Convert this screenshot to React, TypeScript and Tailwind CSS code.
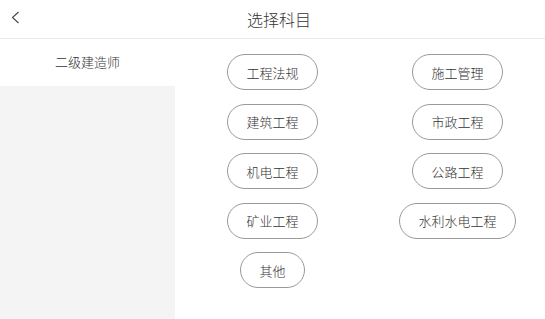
import React from 'react';

const subjects = ['工程法规', '施工管理', '建筑工程', '市政工程', '机电工程', '公路工程', '矿业工程', '水利水电工程', '其他'];

const App = () => {
  return (
    <div
      className="w-[545px] h-[319px] bg-white text-[#333] font-light overflow-hidden flex flex-col"
      style={{ fontFamily: '"Noto Sans CJK SC", "Noto Sans", sans-serif' }}
    >
      <div className="h-[39px] shrink-0 flex items-center border-b border-[#ebebeb] relative">
        <svg className="absolute left-[11px] top-[11px]" width="9" height="13" viewBox="0 0 9 13" fill="none">
          <path d="M7.5 1 L1.5 6.5 L7.5 12" stroke="#444" strokeWidth="1.1" />
        </svg>
        <div className="flex-1 text-center pl-[13px] text-[16px] leading-none">选择科目</div>
      </div>

      <div className="flex flex-1">
        <div className="w-[175px] shrink-0 bg-[#f4f4f4] flex flex-col">
          <div className="h-[47px] bg-white flex items-center justify-center text-[13px] pb-[1px]">二级建造师</div>
        </div>

        <div className="flex-1 pl-[5px] pt-[15px]">
          <div className="grid grid-cols-[185px_185px] gap-y-[13.5px]">
            {subjects.map((s) => (
              <div key={s} className="flex justify-center">
                <button className="h-[36px] px-[18px] rounded-full border border-[#999] text-[13px] leading-none flex items-center">
                  {s}
                </button>
              </div>
            ))}
          </div>
        </div>
      </div>
    </div>
  );
};

export default App;
